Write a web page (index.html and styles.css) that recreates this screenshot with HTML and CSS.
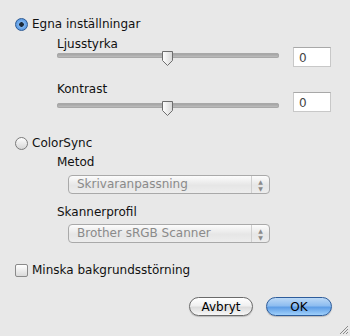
FILE: index.html
```html
<!DOCTYPE html>
<html lang="sv">
<head>
  <meta charset="UTF-8">
  <title>Egna inställningar</title>
  <link rel="stylesheet" href="styles.css">
</head>
<body>
  <div class="dialog">
    <div class="option">
      <span class="radio radio-on"></span>
      <span>Egna inställningar</span>
    </div>
    <div class="group">
      <div class="label">Ljusstyrka</div>
      <div class="slider-row">
        <div class="slider">
          <svg class="thumb" width="13" height="17" viewBox="0 0 13 17">
            <defs>
              <linearGradient id="tg" x1="0" y1="0" x2="1" y2="0">
                <stop offset="0" stop-color="#ffffff"/>
                <stop offset="1" stop-color="#d8d8d8"/>
              </linearGradient>
            </defs>
            <path d="M1.5 1.5 H11.5 V10.5 L6.5 15.5 L1.5 10.5 Z" fill="url(#tg)" stroke="#6e6e6e"/>
          </svg>
        </div>
        <div class="value">0</div>
      </div>

      <div class="label label-gap">Kontrast</div>
      <div class="slider-row">
        <div class="slider slider-low">
          <svg class="thumb" width="13" height="17" viewBox="0 0 13 17">
            <path d="M1.5 1.5 H11.5 V10.5 L6.5 15.5 L1.5 10.5 Z" fill="url(#tg)" stroke="#6e6e6e"/>
          </svg>
        </div>
        <div class="value">0</div>
      </div>
    </div>

    <div class="option option-colorsync">
      <span class="radio"></span>
      <span>ColorSync</span>
    </div>
    <div class="group">
      <div class="label label-metod">Metod</div>
      <div class="select select-first">
        <span class="select-text">Skrivaranpassning</span>
        <span class="arrows">▲<br>▼</span>
      </div>
      <div class="label label-profile">Skannerprofil</div>
      <div class="select">
        <span class="select-text">Brother sRGB Scanner</span>
        <span class="arrows">▲<br>▼</span>
      </div>
    </div>

    <div class="option option-check">
      <span class="checkbox"></span>
      <span>Minska bakgrundsstörning</span>
    </div>

    <div class="buttons">
      <button class="btn">Avbryt</button>
      <button class="btn btn-default">OK</button>
    </div>
  </div>

  <svg class="grip" width="11" height="11" viewBox="0 0 11 11">
    <path d="M10 2 L2 10 M10 5 L5 10 M10 8 L8 10" stroke="#8a8a8a" stroke-width="1"/>
  </svg>
</body>
</html>
```

FILE: styles.css
```css
html, body {
  margin: 0;
  padding: 0;
}

body {
  font-family: "DejaVu Sans", "Liberation Sans", sans-serif;
  font-size: 12px;
  color: #111;
  background: #e8e8e8;
  width: 350px;
  height: 336px;
  position: relative;
  overflow: hidden;
}

.dialog {
  padding: 16px 0 0 15px;
}

.option {
  display: flex;
  align-items: center;
  gap: 4px;
  height: 16px;
  line-height: 16px;
}

.option-colorsync {
  margin-top: 18px;
}

.option-check {
  margin-top: 19px;
}

.radio {
  width: 13px;
  height: 13px;
  box-sizing: border-box;
  border-radius: 50%;
  border: 1px solid #7a7a7a;
  background: linear-gradient(#fdfdfd, #d6d6d6);
}

.radio-on {
  position: relative;
  border-color: #2c5a94;
  background: radial-gradient(circle at 50% 50%, #1b2a3a 0, #1b2a3a 2px, #7fb4ef 2.6px, #3f86d9 100%);
}

.checkbox {
  width: 13px;
  height: 13px;
  box-sizing: border-box;
  border: 1px solid #8a8a8a;
  border-radius: 2px;
  background: linear-gradient(#ffffff, #dadada);
}

.group {
  padding-left: 42px;
}

.label {
  line-height: 14px;
  margin-top: 5px;
}

.label-gap {
  margin-top: 15px;
}

.label-metod {
  margin-top: 4px;
}

.label-profile {
  margin-top: 11px;
}

.slider-row {
  display: flex;
  align-items: flex-start;
  margin-top: -4px;
}

.slider {
  position: relative;
  width: 222px;
  height: 17px;
  margin-top: 3px;
}

.slider::before {
  content: "";
  display: block;
  margin-top: 3px;
  height: 5px;
  border-radius: 3px;
  background: linear-gradient(#9c9c9c, #c4c4c4);
  box-shadow: inset 0 0 0 1px #a8a8a8;
}

.slider-low {
  margin-top: 8px;
}

.thumb {
  position: absolute;
  top: 0;
  left: 104px;
}

.value {
  width: 38px;
  height: 20px;
  box-sizing: border-box;
  margin-left: 14px;
  padding: 3px 0 0 5px;
  background: #fff;
  border: 1px solid #c8c8c8;
  border-top-color: #a8a8a8;
  color: #444;
  line-height: 14px;
}

.select {
  display: flex;
  align-items: center;
  width: 202px;
  height: 19px;
  box-sizing: border-box;
  margin: 5px 0 0 11px;
  border: 1px solid #a9a9a9;
  border-radius: 4px;
  background: linear-gradient(#fcfcfc, #e6e6e6 55%, #ededed);
  color: #8a8a8a;
}

.select-first {
  margin-top: 6px;
}

.select-text {
  flex: 1;
  padding-left: 8px;
  line-height: 17px;
}

.arrows {
  width: 18px;
  height: 17px;
  border-left: 1px solid #cfcfcf;
  font-size: 6px;
  line-height: 7px;
  text-align: center;
  color: #8a8a8a;
  padding-top: 2px;
  box-sizing: border-box;
}

.buttons {
  display: flex;
  justify-content: flex-end;
  gap: 13px;
  margin-top: 19px;
  padding-right: 18px;
}

.btn {
  height: 19px;
  width: 64px;
  padding: 0;
  font-family: inherit;
  font-size: 12px;
  color: #000;
  border: 1px solid #6a6a6a;
  border-radius: 10px;
  background: linear-gradient(#ffffff, #f0f0f0 45%, #dcdcdc 55%, #f7f7f7);
  box-shadow: 0 1px 1px rgba(0, 0, 0, 0.2);
}

.btn-default {
  width: 66px;
  border-color: #2d5c9b;
  background: linear-gradient(#bcd9f6, #8ebdf0 45%, #5f9ee6 55%, #9fd0fb);
}

.grip {
  position: absolute;
  right: 1px;
  bottom: 1px;
}
```
